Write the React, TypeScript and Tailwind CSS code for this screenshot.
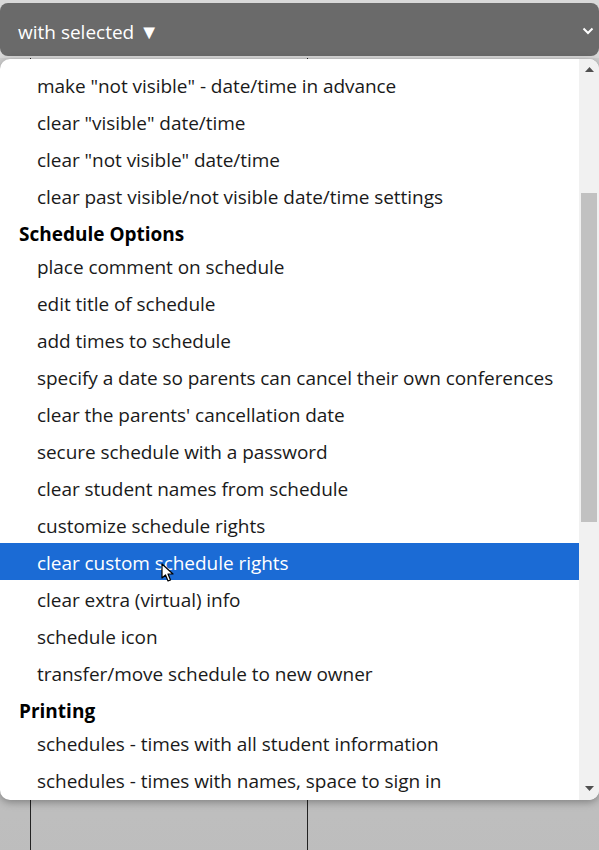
import React from "react";

type Row = { t: string; h?: boolean; sel?: boolean };

const rows: Row[] = [
  { t: 'make "not visible" - date/time in advance' },
  { t: 'clear "visible" date/time' },
  { t: 'clear "not visible" date/time' },
  { t: "clear past visible/not visible date/time settings" },
  { t: "Schedule Options", h: true },
  { t: "place comment on schedule" },
  { t: "edit title of schedule" },
  { t: "add times to schedule" },
  { t: "specify a date so parents can cancel their own conferences" },
  { t: "clear the parents' cancellation date" },
  { t: "secure schedule with a password" },
  { t: "clear student names from schedule" },
  { t: "customize schedule rights" },
  { t: "clear custom schedule rights", sel: true },
  { t: "clear extra (virtual) info" },
  { t: "schedule icon" },
  { t: "transfer/move schedule to new owner" },
  { t: "Printing", h: true },
  { t: "schedules - times with all student information" },
  { t: "schedules - times with names, space to sign in" },
];

export default function App() {
  return (
    <div
      className="relative w-[599px] h-[850px] overflow-hidden bg-[#d9d9d9]"
      style={{ fontFamily: '"Open Sans", "Noto Sans", sans-serif' }}
    >
      <div className="pt-[3px]">
        <div className="h-[53px] rounded-[8px] bg-[#6a6a6a] flex items-center justify-between pl-[18px] pr-[5px]">
          <span className="text-white text-[19px] tracking-[0px] pt-[4px]">
            with selected <span className="text-[20px]">▼</span>
          </span>
          <svg width="12" height="8" viewBox="0 0 12 8" className="mt-[2px]">
            <path d="M1.5 1.5 L6 6 L10.5 1.5" stroke="white" strokeWidth="2" fill="none" />
          </svg>
        </div>
      </div>
      {/* underlying table */}
      <div className="mt-[2px] h-[800px] bg-gradient-to-b from-[#cfcfcf] to-[#bdbdbd] flex">
        <div className="w-[30px]" />
        <div className="w-[278px] border-l border-r border-[#222]" />
        <div className="flex-1" />
      </div>
      {/* dropdown */}
      <div className="absolute left-0 top-[59px] w-[599px] h-[741px] bg-white rounded-[10px] shadow-[0_2px_8px_rgba(0,0,0,0.35)] overflow-hidden flex">
        <div className="flex-1 pt-[7px] flex flex-col">
          {rows.map((r, i) =>
            r.h ? (
              <div key={i} className="h-[33px] pl-[19px] pt-[7px] text-[19px] font-bold text-black leading-[26px] tracking-[0px]">
                {r.t}
              </div>
            ) : (
              <div
                key={i}
                className={
                  "relative h-[37px] pl-[37px] pt-[4px] flex items-center text-[19px] tracking-[-0.05px] " +
                  (r.sel ? "bg-[#1b6bd5] text-white" : "text-[#1a1a1a]")
                }
              >
                {r.t}
                {r.sel && (
                  <svg
                    className="absolute left-[161px] top-[20px]"
                    width="14"
                    height="20"
                    viewBox="0 0 14 20"
                  >
                    <path
                      d="M1 1 L1 15 L4.5 12 L7 18 L9.5 17 L7 11 L12 11 Z"
                      fill="white"
                      stroke="black"
                      strokeWidth="1.2"
                      strokeLinejoin="round"
                    />
                  </svg>
                )}
              </div>
            )
          )}
        </div>
        <div className="w-[20px] bg-[#f1f1f1] flex flex-col items-center">
          <div className="h-[17px] flex items-center justify-center pt-[3px]">
            <svg width="9" height="5" viewBox="0 0 9 5"><path d="M0 5 L4.5 0 L9 5 Z" fill="#505050" /></svg>
          </div>
          <div className="mt-[117px] w-[16px] h-[329px] bg-[#c1c1c1]" />
          <div className="flex-1" />
          <div className="h-[20px] flex items-center justify-center pb-[4px]">
            <svg width="9" height="5" viewBox="0 0 9 5"><path d="M0 0 L4.5 5 L9 0 Z" fill="#505050" /></svg>
          </div>
        </div>
      </div>
    </div>
  );
}
